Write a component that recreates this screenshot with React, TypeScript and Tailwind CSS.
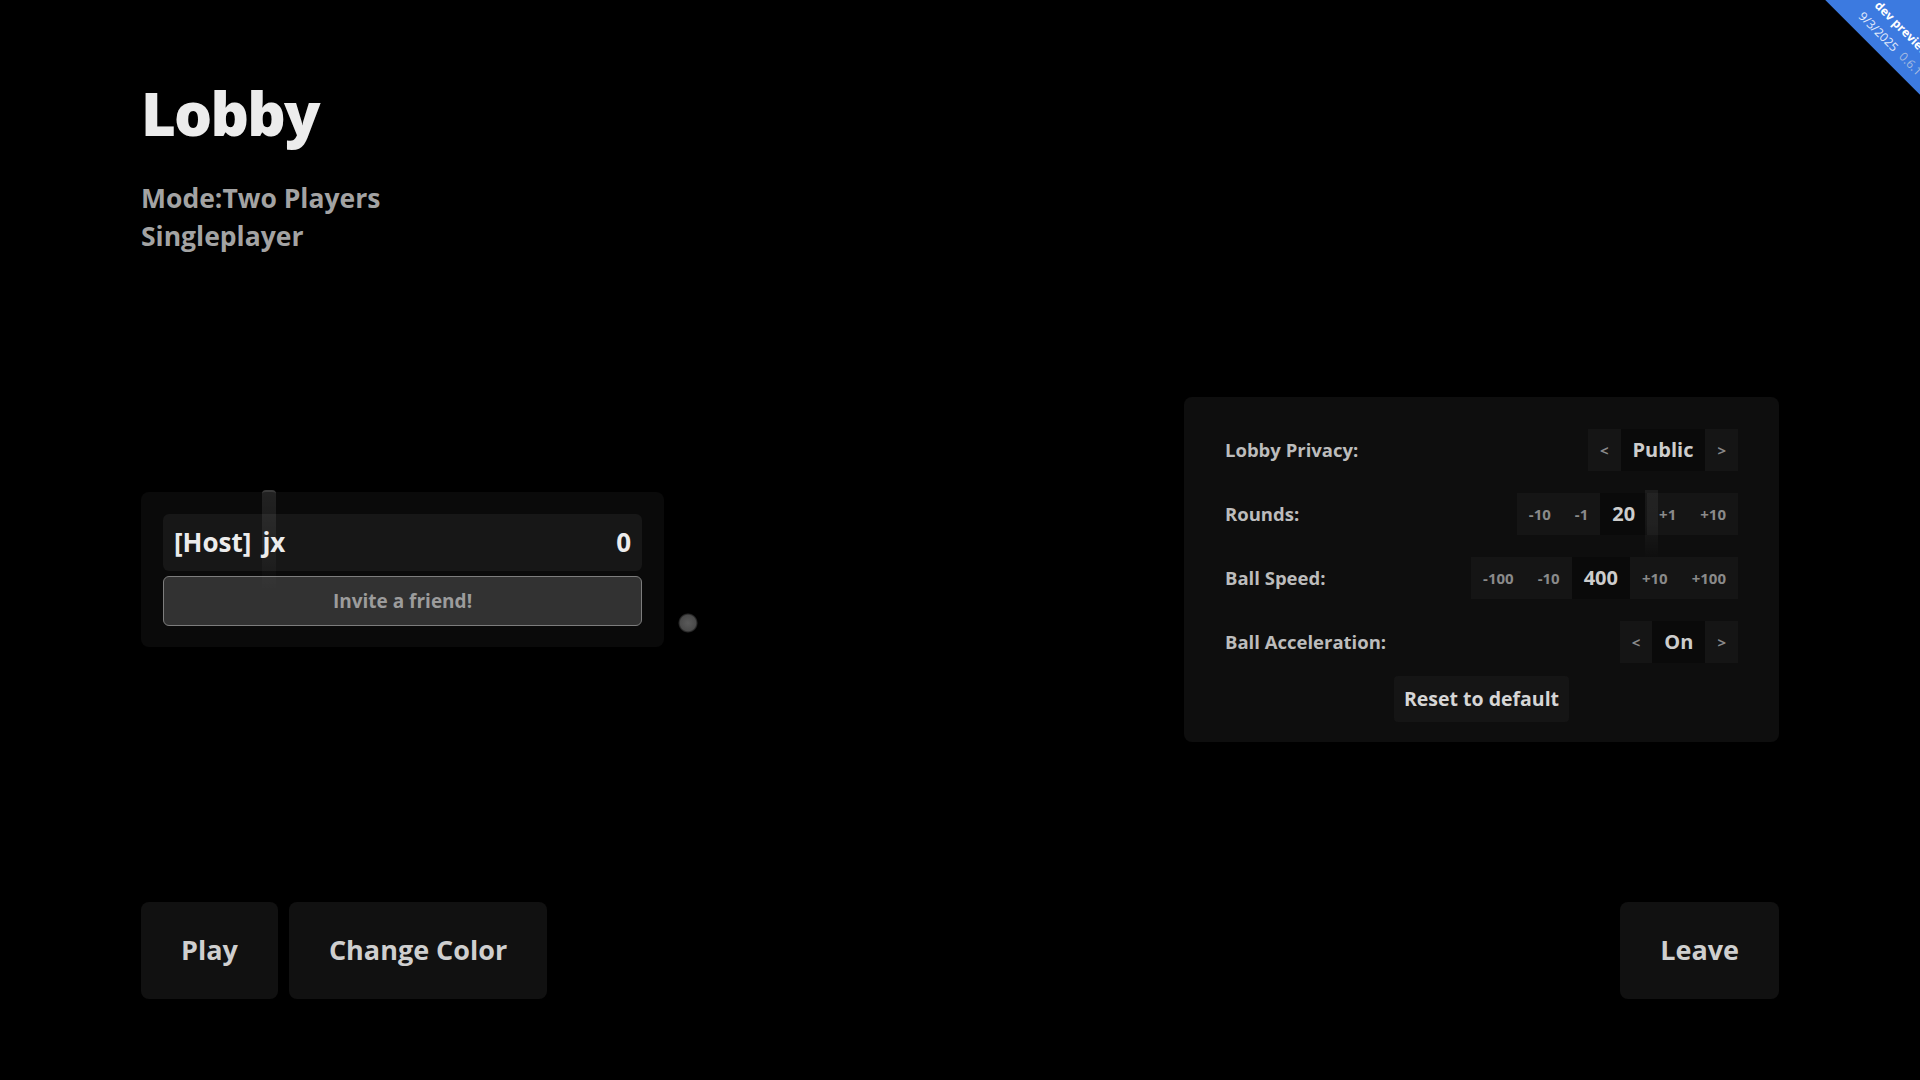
import React from 'react'

const font = "font-['Open_Sans','Noto_Sans',sans-serif]"

function StepButton({ label }: { label: string }) {
  return (
    <button className="flex h-full items-center bg-[#151515] px-3 text-[15px] font-bold text-[#8a8a8a]">
      {label}
    </button>
  )
}

function Value({ value }: { value: string }) {
  return (
    <span className="flex h-full items-center bg-[#0a0a0a] px-3 text-[20px] font-bold text-[#cdcdcd]">
      {value}
    </span>
  )
}

function SettingRow({ label, children }: { label: string; children: React.ReactNode }) {
  return (
    <div className="flex h-[42px] items-center justify-between">
      <span className="text-[18.5px] font-bold text-[#bcbcbc]">{label}</span>
      <div className="flex h-full items-stretch">{children}</div>
    </div>
  )
}

function DevRibbon() {
  return (
    <div className="pointer-events-none absolute right-0 top-0 h-[160px] w-[160px] overflow-hidden">
      <div className="absolute left-[10px] top-[-67px] h-[134px] w-[300px] rotate-45 bg-[#3c7ae0]">
        <div className="flex flex-col pl-[122px] pt-[90px] text-[12px] leading-[19px]">
          <span className="font-bold text-white">dev preview</span>
          <span className="-ml-[4px] whitespace-nowrap text-[#e4ecfb]">
            9/3/2025 <span className="ml-1 text-[#a9bde0]">0.6.1</span>
          </span>
        </div>
      </div>
    </div>
  )
}

export default function App() {
  return (
    <div className={`relative h-screen w-full overflow-hidden bg-black ${font}`}>
      <DevRibbon />

      <div className="relative flex h-full flex-col px-[141px] pb-[81px] pt-[83px]">
        <header>
          <h1 className="text-[60px] font-extrabold leading-none tracking-[-0.03em] text-[#ececec]">Lobby</h1>
          <div className="mt-[36px] text-[26.5px] font-bold leading-[38px] text-[#a3a3a3]">
            <p>Mode:Two Players</p>
            <p>Singleplayer</p>
          </div>
        </header>

        <main className="flex flex-1 items-center justify-between pb-[18px]">
          <section className="w-[523px] rounded-lg bg-[#0a0a0a] p-[22px] pb-[21px]">
            <div className="flex h-[57px] items-center justify-between rounded-md bg-[#171717] px-[11px] text-[26px] font-bold text-[#ececec]">
              <span>
                [Host]<span className="ml-[11px]">jx</span>
              </span>
              <span>0</span>
            </div>
            <button className="mt-[5px] h-[50px] w-full rounded-md border-[1.5px] border-[#7d7d7d] bg-[#323232] text-[19px] font-bold text-[#9c9c9c]">
              Invite a friend!
            </button>
          </section>

          <section className="flex w-[595px] flex-col gap-[22px] rounded-lg bg-[#0e0e0e] px-[41px] pb-[20px] pt-[32px]">
            <SettingRow label="Lobby Privacy:">
              <StepButton label="<" />
              <Value value="Public" />
              <StepButton label=">" />
            </SettingRow>
            <SettingRow label="Rounds:">
              <StepButton label="-10" />
              <StepButton label="-1" />
              <Value value="20" />
              <StepButton label="+1" />
              <StepButton label="+10" />
            </SettingRow>
            <SettingRow label="Ball Speed:">
              <StepButton label="-100" />
              <StepButton label="-10" />
              <Value value="400" />
              <StepButton label="+10" />
              <StepButton label="+100" />
            </SettingRow>
            <SettingRow label="Ball Acceleration:">
              <StepButton label="<" />
              <Value value="On" />
              <StepButton label=">" />
            </SettingRow>
            <div className="-mt-[9px] flex justify-center">
              <button className="h-[46px] rounded-sm bg-[#151515] px-[10px] text-[19.5px] font-bold text-[#d6d6d6]">
                Reset to default
              </button>
            </div>
          </section>
        </main>

        <footer className="flex items-end justify-between">
          <div className="flex gap-[11px]">
            <button className="h-[97px] rounded-lg bg-[#111111] px-10 text-[27px] font-bold text-[#cfcfcf]">Play</button>
            <button className="h-[97px] rounded-lg bg-[#111111] px-10 text-[27px] font-bold text-[#cfcfcf]">Change Color</button>
          </div>
          <button className="h-[97px] rounded-lg bg-[#111111] px-10 text-[27px] font-bold text-[#cfcfcf]">Leave</button>
        </footer>
      </div>

      {/* pong canvas drawn over the lobby */}
      <div className="pointer-events-none absolute left-[262px] top-[490px] h-[100px] w-[14px] rounded-t-sm border-t-2 border-[#3a3a3a] bg-gradient-to-b from-white/[0.1] via-white/[0.06] to-transparent" />
      <div className="pointer-events-none absolute left-[1645px] top-[490px] h-[68px] w-[13px] bg-gradient-to-b from-white/[0.06] via-white/[0.05] to-transparent" />
      <div className="pointer-events-none absolute left-[678px] top-[613px] h-[20px] w-[20px] rounded-full bg-[radial-gradient(circle,#5a5a5a_0%,#4a4a4a_55%,transparent_72%)]" />
    </div>
  )
}
